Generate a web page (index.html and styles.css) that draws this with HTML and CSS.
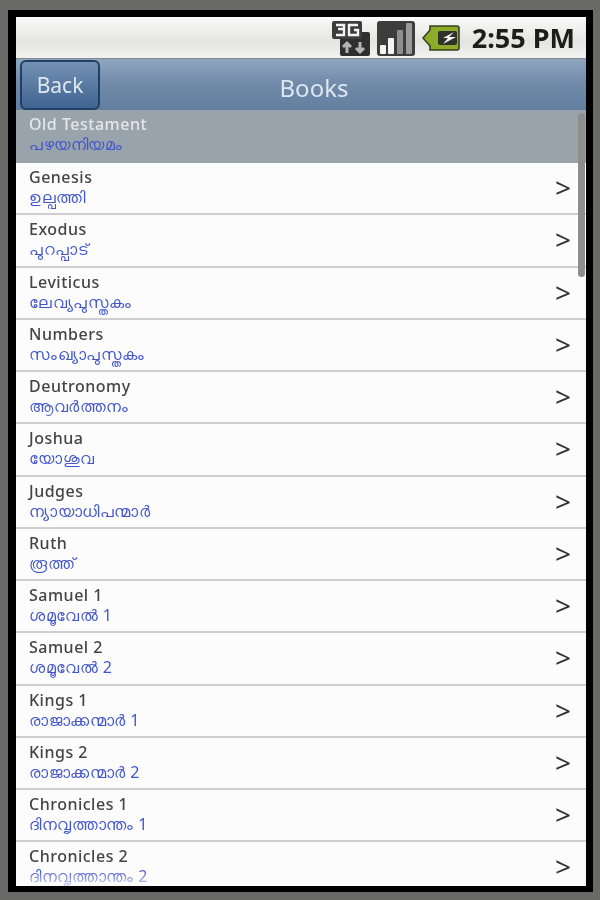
FILE: index.html
```html
<!DOCTYPE html>
<html lang="en">

<head>
    <meta charset="UTF-8">
    <meta name="viewport" content="width=device-width, initial-scale=1.0">
    <title>Books</title>
    <link rel="stylesheet" href="styles.css">
</head>

<body>
    <div class="phone">
        <div class="screen">
            <div class="status">
                <svg class="ic-3g" width="38" height="36" viewBox="0 0 38 36">
                    <rect x="8" y="12" width="30" height="24" rx="2" fill="#2f2f2f" />
                    <rect x="0" y="1" width="30" height="18" rx="2" fill="#3c3c3c" />
                    <path d="M4 5h8v4h-6M12 9v6h-8M26 5h-9v10h9v-5h-4" fill="none" stroke="#f4f4f4" stroke-width="2.4" />
                    <path d="M15 33v-10m-4 4l4-4 4 4" fill="none" stroke="#b4b4b4" stroke-width="3" />
                    <path d="M28 22v10m-4-4l4 4 4-4" fill="none" stroke="#b4b4b4" stroke-width="3" />
                </svg>
                <svg class="ic-signal" width="38" height="36" viewBox="0 0 38 36">
                    <rect x="0" y="1" width="38" height="35" rx="3" fill="#3d3d3d" />
                    <rect x="3" y="25" width="6" height="9" rx="1" fill="#f4f4f4" />
                    <rect x="11" y="18" width="6" height="16" rx="1" fill="#f4f4f4" />
                    <rect x="20" y="10" width="6" height="24" rx="1" fill="#8f8f8f" />
                    <rect x="29" y="3" width="6" height="31" rx="1" fill="#9a9a9a" />
                </svg>
                <svg class="ic-batt" width="38" height="26" viewBox="0 0 38 26">
                    <path d="M8 1h27a2 2 0 0 1 2 2v20a2 2 0 0 1-2 2H8v-4l-7-8 7-8z" fill="#8cab2a" stroke="#38421f" stroke-width="1.6" />
                    <rect x="16" y="6" width="19" height="14" rx="2" fill="#2e3228" />
                    <path d="M32 7l-11 6h5l-5 6 13-7h-7z" fill="#f4f4f4" />
                </svg>
                <span class="clock">2:55 PM</span>
            </div>

            <div class="nav">
                <button class="back">Back</button>
                <span class="nav-title">Books</span>
            </div>

            <div class="list">
                <div class="section">
                    <p class="en">Old Testament</p>
                    <p class="ml">പഴയനിയമം</p>
                </div>
                <div class="row"><div><p class="en">Genesis</p><p class="ml">ഉല്പത്തി</p></div><span class="arrow">&gt;</span></div>
                <div class="row"><div><p class="en">Exodus</p><p class="ml">പുറപ്പാട്</p></div><span class="arrow">&gt;</span></div>
                <div class="row"><div><p class="en">Leviticus</p><p class="ml">ലേവ്യപുസ്തകം</p></div><span class="arrow">&gt;</span></div>
                <div class="row"><div><p class="en">Numbers</p><p class="ml">സംഖ്യാപുസ്തകം</p></div><span class="arrow">&gt;</span></div>
                <div class="row"><div><p class="en">Deutronomy</p><p class="ml">ആവർത്തനം</p></div><span class="arrow">&gt;</span></div>
                <div class="row"><div><p class="en">Joshua</p><p class="ml">യോശുവ</p></div><span class="arrow">&gt;</span></div>
                <div class="row"><div><p class="en">Judges</p><p class="ml">ന്യായാധിപന്മാർ</p></div><span class="arrow">&gt;</span></div>
                <div class="row"><div><p class="en">Ruth</p><p class="ml">രൂത്ത്</p></div><span class="arrow">&gt;</span></div>
                <div class="row"><div><p class="en">Samuel 1</p><p class="ml">ശമൂവേൽ 1</p></div><span class="arrow">&gt;</span></div>
                <div class="row"><div><p class="en">Samuel 2</p><p class="ml">ശമൂവേൽ 2</p></div><span class="arrow">&gt;</span></div>
                <div class="row"><div><p class="en">Kings 1</p><p class="ml">രാജാക്കന്മാർ 1</p></div><span class="arrow">&gt;</span></div>
                <div class="row"><div><p class="en">Kings 2</p><p class="ml">രാജാക്കന്മാർ 2</p></div><span class="arrow">&gt;</span></div>
                <div class="row"><div><p class="en">Chronicles 1</p><p class="ml">ദിനവൃത്താന്തം 1</p></div><span class="arrow">&gt;</span></div>
                <div class="row"><div><p class="en">Chronicles 2</p><p class="ml">ദിനവൃത്താന്തം 2</p></div><span class="arrow">&gt;</span></div>
                <div class="scrollbar"></div>
                <div class="fade"></div>
            </div>
        </div>
    </div>
</body>

</html>
```

FILE: styles.css
```css
html,
body {
    margin: 0;
    height: 100%;
}

body {
    background-color: rgb(105, 105, 103);
    font-family: "Noto Sans", "Open Sans", sans-serif;
}

.phone {
    height: 900px;
    box-sizing: border-box;
    padding: 10px 7px 8px 8px;
}

.screen {
    background-color: black;
    height: 882px;
    box-sizing: border-box;
    padding: 7px 7px 6px 8px;
    display: flex;
    flex-direction: column;
}

.status,
.nav,
.list {
    filter: blur(0.5px);
}

.status {
    height: 41px;
    flex: none;
    display: flex;
    align-items: center;
    justify-content: flex-end;
    padding-right: 11px;
    background: linear-gradient(#fafafa, #e4e4e2 60%, #f2f2f0);
    border-bottom: 1px solid #8a8a88;
}

.ic-3g {
    margin-right: 7px;
}

.ic-signal {
    margin-right: 7px;
}

.ic-batt {
    margin-right: 12px;
}

.clock {
    font-size: 27px;
    font-weight: 700;
    color: #1c1c1c;
}

.nav {
    height: 51px;
    flex: none;
    position: relative;
    display: flex;
    align-items: center;
    background: linear-gradient(#90a6c0, #7089a9 50%, #627e9f);
}

.back {
    width: 80px;
    height: 50px;
    margin-left: 4px;
    border: 2px solid #1f3f63;
    border-radius: 6px;
    background: linear-gradient(#7591b3, #3f6491);
    color: #dfe8f2;
    font-family: inherit;
    font-size: 21px;
    padding: 0;
}

.nav-title {
    position: absolute;
    left: 26px;
    right: 0;
    top: 12px;
    text-align: center;
    color: #dce6f0;
    font-size: 24px;
}

.list {
    flex: 1;
    position: relative;
    overflow: hidden;
    background-color: #fcfcfc;
}

.section {
    height: 53px;
    box-sizing: border-box;
    padding: 4px 13px 0 13px;
    background-color: rgb(152, 163, 172);
}

.section .en {
    color: #e4e8ea;
}

.row {
    height: 52.25px;
    box-sizing: border-box;
    padding: 4px 15px 0 13px;
    display: flex;
    justify-content: space-between;
    border-bottom: 2px solid #cfcfcf;
}

p {
    margin: 0;
}

.en {
    font-size: 16px;
    line-height: 20px;
    font-weight: 500;
    color: #444;
    letter-spacing: 0.5px;
}

.ml {
    font-size: 16px;
    line-height: 20px;
    letter-spacing: 0.5px;
    color: #4257cc;
}

.arrow {
    font-size: 28px;
    line-height: 40px;
    color: #333;
}

.scrollbar {
    position: absolute;
    top: 3px;
    right: 1px;
    width: 7px;
    height: 164px;
    background-color: #8e8e8e;
    border-radius: 4px;
}

.fade {
    position: absolute;
    left: 0;
    right: 0;
    bottom: 0;
    height: 16px;
    background: linear-gradient(rgba(252, 252, 252, 0), rgba(252, 252, 252, 0.75));
}
```
